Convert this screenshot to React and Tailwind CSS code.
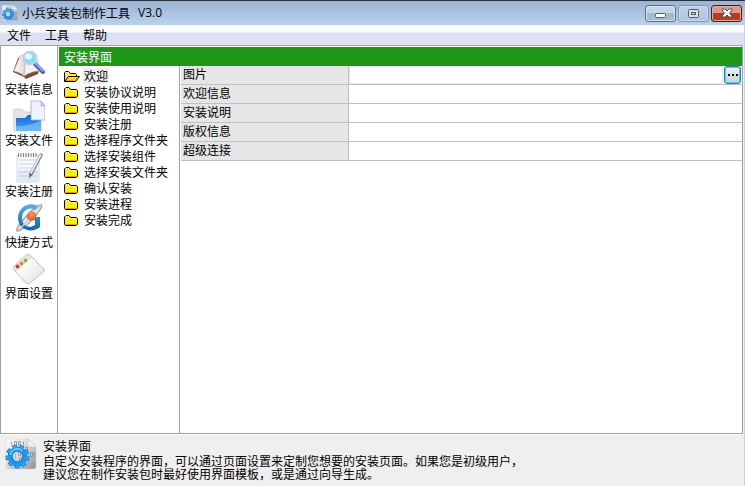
import React, { useState } from 'react';

// ICONS
const GearIcon = ({ className }) => (
  <svg viewBox="0 0 32 32" className={className} aria-hidden="true">
    <defs>
      <linearGradient id="gearPage" x1="0" y1="0" x2="1" y2="1">
        <stop offset="0" stopColor="#fdfdfd" />
        <stop offset=".45" stopColor="#dcdcdc" />
        <stop offset="1" stopColor="#8f8f8f" />
      </linearGradient>
    </defs>
    <path d="M3 1h20l8 8v20a2 2 0 0 1-2 2H3a2 2 0 0 1-2-2V3a2 2 0 0 1 2-2z" fill="url(#gearPage)" stroke="#d4d4d4" strokeWidth=".5" />
    <path d="M23 1l8 8h-6a2 2 0 0 1-2-2z" fill="#f4f4f4" stroke="#bbb" strokeWidth=".5" />
    <path
      d="M6.500 3.500v4M9.500 3.500h2v4h-2zM13.500 3.500h2v4h-2zM18.500 3.500v4M20.500 9.500h2v4h-2zM25.500 14.500h2v4h-2zM29.500 14v5"
      fill="none"
      stroke="#8a8a8a"
      strokeWidth=".8"
    />
    <path d="M10.500 16v4M13.500 14.500h2v3h-2zM14.500 20h2v3h-2z" fill="none" stroke="#9a9a9a" strokeWidth=".8" />
    <g fill="none">
      <circle cx="12.500" cy="18.500" r="9.500" stroke="#0a72d2" strokeWidth="5" strokeDasharray="4 2.630" />
      <circle cx="12.500" cy="18.500" r="7.300" stroke="#0a72d2" strokeWidth="5" />
      <circle cx="12.500" cy="18.500" r="9.500" stroke="#2aa9fb" strokeWidth="3.600" strokeDasharray="3 3.630" strokeDashoffset="-.5" />
      <circle cx="12.500" cy="18.500" r="7.300" stroke="#1b97f2" strokeWidth="3.600" />
      <path d="M5.500 17a7 7 0 0 1 12-4" stroke="#66cbff" strokeWidth="1.800" />
    </g>
  </svg>
);

const BookIcon = () => (
  <svg viewBox="0 0 32 32" className="size-8" aria-hidden="true">
    <defs>
      <linearGradient id="bookPage" x1="0" y1="0" x2="1" y2="0">
        <stop offset="0" stopColor="#ffffff" />
        <stop offset="1" stopColor="#d9d3d6" />
      </linearGradient>
    </defs>
    <path d="M0 23L5 9l3-1 4 14 14-1-1 4-12 5-2-2z" fill="#7d4b33" />
    <path d="M1 22L7 7c2-2 5-1 6 0L11 27c-3-3-7-4-10-5z" fill="url(#bookPage)" stroke="#b8aaa2" strokeWidth=".6" />
    <path d="M11 27L13 7c4 2 9 3 12 4l1 11c-6 0-10 2-15 5z" fill="#f4f2f6" stroke="#bab0b4" strokeWidth=".6" />
    <path d="M22 15l8 8" stroke="#4a62bd" strokeWidth="4" strokeLinecap="round" />
    <path d="M22.500 14.500l7.500 7.500" stroke="#9fb4f3" strokeWidth="1.500" strokeLinecap="round" />
    <circle cx="17" cy="9" r="6.500" fill="#86dfe4" stroke="#c2cfe9" strokeWidth="2" />
    <ellipse cx="15.500" cy="7.500" rx="3.500" ry="3" fill="#dcffff" />
  </svg>
);

const FilesIcon = () => (
  <svg viewBox="0 0 32 32" className="size-8" aria-hidden="true">
    <defs>
      <linearGradient id="folderBlue" x1="0" y1="0" x2="0" y2="1">
        <stop offset="0" stopColor="#1269cf" />
        <stop offset="1" stopColor="#4ba5f5" />
      </linearGradient>
    </defs>
    <path d="M0 11a2 2 0 0 1 2-2h7l3 3h16v19H0z" fill="#e1e5ec" stroke="#c0c8d6" strokeWidth=".7" />
    <path d="M3 18h9l3-3h13v16H3z" fill="url(#folderBlue)" />
    <path d="M3 26c9 0 18-2 25-6v11H3z" fill="#8ccbfc" opacity=".55" />
    <path d="M18 1h10l4 5v14H18z" fill="#f0f3ff" stroke="#9fa8da" strokeWidth=".8" />
    <path d="M28 1v5h4z" fill="#c7cdec" stroke="#9fa8da" strokeWidth=".6" />
  </svg>
);

const NotepadIcon = () => (
  <svg viewBox="0 0 32 32" className="size-8" aria-hidden="true">
    <path d="M4 4h22v25l-1 2H4z" fill="#f7f9fc" stroke="#c9ced6" strokeWidth=".8" />
    <path d="M5 19h20v11H5z" fill="#dfe9f8" />
    <path d="M6 9h18M6 13h18M6 17h18M6 21h18M6 25h18" stroke="#c3d3ec" strokeWidth="1" />
    <path
      d="M5.500 2v4M8 2v4M10.500 2v4M13 2v4M15.500 2v4M18 2v4M20.500 2v4M23 2v4"
      stroke="#777"
      strokeWidth=".9"
    />
    <path d="M28 4L18 23" stroke="#7d8288" strokeWidth="3.500" strokeLinecap="round" />
    <path d="M27.500 4L18 22" stroke="#eceef0" strokeWidth="1.800" strokeLinecap="round" />
    <path d="M16.500 22l3 1.500-3.500 4z" fill="#666" />
  </svg>
);

const ShortcutIcon = () => (
  <svg viewBox="0 0 32 32" className="size-8" aria-hidden="true">
    <defs>
      <linearGradient id="ringBlue" x1="0" y1="0" x2="0" y2="1">
        <stop offset="0" stopColor="#5bb0e6" />
        <stop offset="1" stopColor="#0d64ac" />
      </linearGradient>
      <radialGradient id="orb" cx=".4" cy=".35" r=".7">
        <stop offset="0" stopColor="#ff9a62" />
        <stop offset="1" stopColor="#e8501c" />
      </radialGradient>
    </defs>
    <path d="M4 29C1 26 23 2 28 3S9 31 4 29z" fill="#e9e9e9" stroke="#9b9b9b" strokeWidth="1.200" />
    <path
      d="M25 4C15-1 5 6 5 16c0 12 14 16 22 9V15H17v3h5v5c-6 4-13 1-13-7C9 9 16 4 22 8z"
      fill="url(#ringBlue)"
    />
    <ellipse cx="18.500" cy="14" rx="4.500" ry="5" transform="rotate(35 18.500 14)" fill="url(#orb)" />
    <path d="M5 28C8 26 12 22 15 18M22 9l5-5" fill="none" stroke="#c9c9c9" strokeWidth="1.500" />
  </svg>
);

const WindowIcon = () => (
  <svg viewBox="0 0 32 32" className="size-8" aria-hidden="true">
    <defs>
      <linearGradient id="panel" x1="0" y1="0" x2="1" y2="1">
        <stop offset=".3" stopColor="#ffffff" />
        <stop offset="1" stopColor="#dedede" />
      </linearGradient>
    </defs>
    <path d="M0 14L14 1l3 1 14 14v2L16 31h-2L0 16z" fill="url(#panel)" stroke="#b8b8b8" strokeWidth=".9" />
    <path d="M0 14L14 1l3 1 2 2L3 18l-3-2z" fill="#e6e6e6" stroke="#c4c4c4" strokeWidth=".5" />
    <circle cx="4.500" cy="13.500" r="1.900" fill="#dc3a2a" />
    <circle cx="8.500" cy="10.500" r="1.900" fill="#e8842a" />
    <circle cx="12.500" cy="7.500" r="1.900" fill="#8ab83c" />
  </svg>
);

const FolderIcon = ({ open }) => (
  <svg viewBox="0 0 16 14" className="w-4 h-3.5 shrink-0" aria-hidden="true">
    {open ? (
      <>
        <path d="M.5 12.500V3.500l1-1h3l2 2h5l1 1v2" fill="#ffe94a" stroke="#000" />
        <path d="M.5 12.500l4-5h11l-4 5z" fill="#ffd91a" stroke="#000" />
        <path d="M2 11.500h9l1.500-2" fill="none" stroke="#f0a010" />
      </>
    ) : (
      <>
        <path d="M.5 11.500V4l1.500-1.500h3l1.500 2h6l1 1v6l-1 1h-11z" fill="#ffee00" stroke="#000" />
        <path d="M1.500 11.500h10.500" stroke="#e8920c" />
        <path d="M2 5.500v-1.500h3l1 1.500h6" fill="none" stroke="#fff9a0" />
      </>
    )}
  </svg>
);

// DATA
const MENUS = ['文件', '工具', '帮助'];

const SECTIONS = [
  { label: '安装信息', Icon: BookIcon },
  { label: '安装文件', Icon: FilesIcon },
  { label: '安装注册', Icon: NotepadIcon },
  { label: '快捷方式', Icon: ShortcutIcon },
  { label: '界面设置', Icon: WindowIcon },
];

const PAGES = [
  '欢迎',
  '安装协议说明',
  '安装使用说明',
  '安装注册',
  '选择程序文件夹',
  '选择安装组件',
  '选择安装文件夹',
  '确认安装',
  '安装进程',
  '安装完成',
];

const FIELDS = ['图片', '欢迎信息', '安装说明', '版权信息', '超级连接'];

const TitleBar = () => (
  <header className="flex h-[25px] shrink-0 items-center border-t border-[#2b3038] bg-linear-to-b from-[#9ab4d3] to-[#bad1ea] pl-[2px] pr-[3px]">
    <GearIcon className="size-4" />
    <h1 className="ml-1 flex flex-1 gap-2">
      <span>小兵安装包制作工具</span>
      <span className="font-['Open_Sans',sans-serif]">V3.0</span>
    </h1>
    <div className="flex gap-[2px]">
      <button
        aria-label="最小化"
        className="flex h-[17px] w-[31px] items-center justify-center rounded-[3px] border border-[#5c6e87] bg-linear-to-b from-[#c5d6ea] from-50% to-[#a3bad5] to-50% shadow-[inset_0_0_0_1px_#d6e3f2]"
      >
        <svg viewBox="0 0 11 5" className="mt-1 w-[11px] h-[5px]" aria-hidden="true">
          <rect x=".5" y=".5" width="10" height="4" rx="1" fill="#fff" stroke="#555b66" />
        </svg>
      </button>
      <button
        aria-label="最大化"
        className="flex h-[17px] w-[31px] items-center justify-center rounded-[3px] border border-[#8296b0] bg-linear-to-b from-[#bdd0e6] to-[#aec5e0] shadow-[inset_0_0_0_1px_#c9daed]"
      >
        <svg viewBox="0 0 11 9" className="w-[11px] h-[9px]" aria-hidden="true">
          <rect x=".5" y=".5" width="10" height="8" rx="1" fill="#dcdfe5" stroke="#555b66" />
          <rect x="3.500" y="3.500" width="4" height="2" fill="#b5c9e2" stroke="#555b66" />
        </svg>
      </button>
      <button
        aria-label="关闭"
        className="flex h-[17px] w-[31px] items-center justify-center rounded-[3px] border border-[#4a1720] bg-linear-to-b from-[#dc9a8d] from-45% to-[#b93a22] to-50% shadow-[inset_0_0_0_1px_#e2a99d]"
      >
        <svg viewBox="0 0 12 10" className="w-3 h-2.5" aria-hidden="true">
          <path
            d="M1 1h3l2 2 2-2h3v1L8.500 5 11 8v1H8L6 7 4 9H1V8l2.500-3L1 2z"
            fill="#fff"
            stroke="#54505a"
          />
        </svg>
      </button>
    </div>
  </header>
);

const MenuBar = () => (
  <nav className="flex h-5 shrink-0 items-center gap-3.5 border-b border-[#e6e6e6] bg-linear-to-b from-[#fafbfd] from-35% to-[#dce1f2] to-45% pl-[7px]">
    {MENUS.map((menu) => (
      <button key={menu}>{menu}</button>
    ))}
  </nav>
);

const App = () => {
  const [page, setPage] = useState(PAGES[0]);

  return (
    <div className="flex min-h-screen flex-col bg-[#efefef] font-['Noto_Sans_CJK_SC',sans-serif] text-xs leading-4 text-black">
      <TitleBar />

      <div className="flex flex-1 flex-col border-r border-[#b9d1ea]">
        <MenuBar />

        {/* MAIN CONTENT */}
        <main className="mr-px flex flex-1 border border-[#a0a0a0] bg-white">
          <aside className="flex w-[57px] shrink-0 flex-col gap-[3px] border-r border-[#a0a0a0] pt-[3px]">
            {SECTIONS.map(({ label, Icon }) => (
              <button key={label} className="flex flex-col items-center">
                <Icon />
                <span>{label}</span>
              </button>
            ))}
          </aside>

          <section className="flex flex-1 flex-col pt-px">
            <h2 className="ml-px h-[19px] shrink-0 bg-[#1e9618] pl-[5px] leading-[19px] text-white">安装界面</h2>

            <div className="flex flex-1">
              {/* PAGE LIST */}
              <ul className="w-[122px] shrink-0 border-r border-[#a0a0a0] pl-1.5 pt-[2px]">
                {PAGES.map((name) => (
                  <li key={name}>
                    <button onClick={() => setPage(name)} className="flex h-4 items-center gap-[3px]">
                      <FolderIcon open={name === page} />
                      <span className={name === page ? 'bg-[#f0f0f0] px-[1px]' : 'px-[1px]'}>{name}</span>
                    </button>
                  </li>
                ))}
              </ul>

              {/* PROPERTIES */}
              <table className="ml-px flex-1 self-start border-collapse">
                <tbody className="flex flex-col">
                  {FIELDS.map((field, i) => (
                    <tr key={field} className="flex h-[19px] border-b border-[#c0c0c0]">
                      <th className="w-[168px] shrink-0 border-r border-[#c0c0c0] bg-[#e6e6e6] pl-[2px] text-left font-normal">
                        <label htmlFor={`field-${i}`}>{field}</label>
                      </th>
                      <td className="flex flex-1">
                        <input
                          id={`field-${i}`}
                          className={
                            i === 0
                              ? 'h-[18px] min-w-0 flex-1 border border-[#e3e6ee] px-1 outline-none'
                              : 'h-[18px] min-w-0 flex-1 px-1 outline-none'
                          }
                        />
                        {i === 0 && (
                          <button
                            aria-label="浏览"
                            className="mx-px flex h-[18px] w-[17px] items-center justify-center rounded-[3px] border border-[#2c7fae] bg-linear-to-b from-[#f2f2f2] to-[#cfcfcf] shadow-[inset_0_0_0_1px_#48d0f8]"
                          >
                            <svg viewBox="0 0 10 2" className="w-2.5 h-0.5 shrink-0" aria-hidden="true">
                              <path d="M0 0h2v2H0zM4 0h2v2H4zM8 0h2v2H8z" />
                            </svg>
                          </button>
                        )}
                      </td>
                    </tr>
                  ))}
                </tbody>
              </table>
            </div>
          </section>
        </main>

        {/* HELP PANEL */}
        <footer className="flex h-[52px] shrink-0 gap-1.5 border-t border-white pl-[5px] pt-[3px]">
          <GearIcon className="size-8 shrink-0" />
          <div>
            <h3>安装界面</h3>
            <p className="leading-[13px]">
              自定义安装程序的界面，可以通过页面设置来定制您想要的安装页面。如果您是初级用户，
              <br />
              建议您在制作安装包时最好使用界面模板，或是通过向导生成。
            </p>
          </div>
        </footer>
      </div>
    </div>
  );
};

export default App;
